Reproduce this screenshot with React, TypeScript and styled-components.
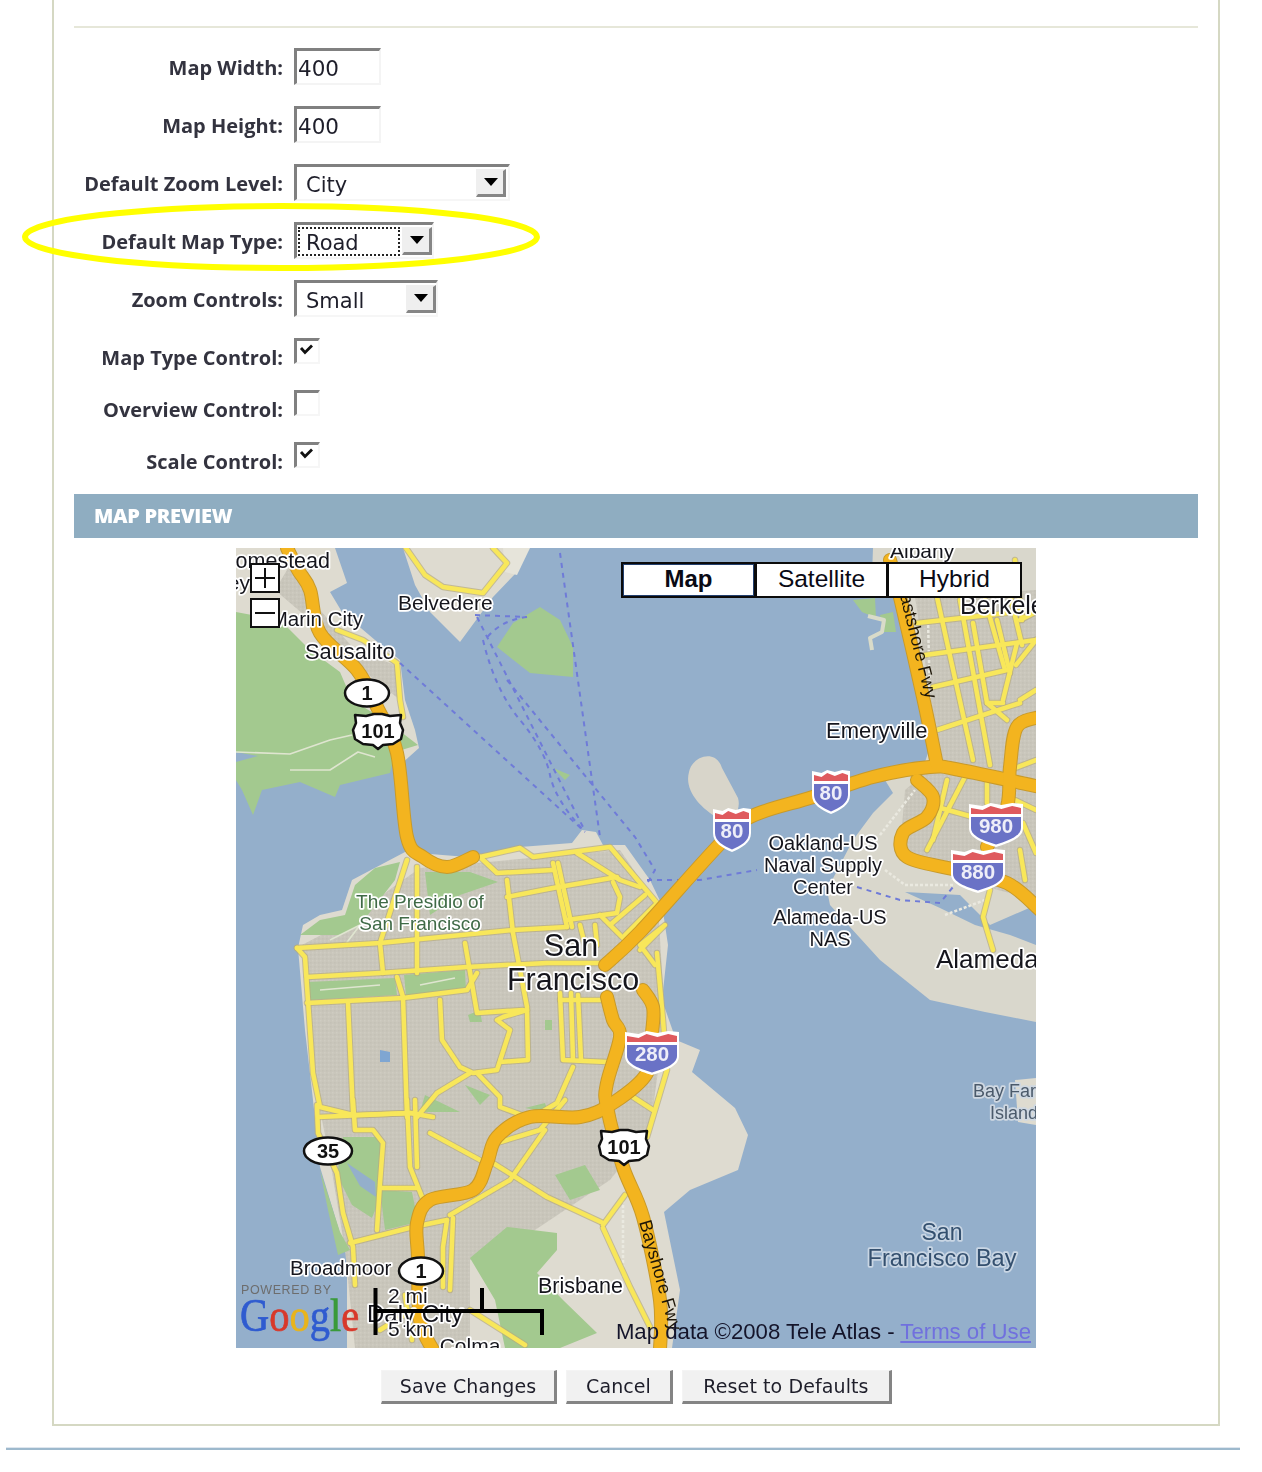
import React from "react";
import styled, { createGlobalStyle } from "styled-components";

const Global = createGlobalStyle`
  html, body { margin: 0; padding: 0; background: #fff; }
`;

const Page = styled.div`
  position: relative;
  width: 1262px;
  height: 1472px;
  overflow: hidden;
  filter: blur(0.5px);
  font-family: "DejaVu Sans", sans-serif;
  color: #2c2c38;
`;

const Panel = styled.div`
  box-sizing: border-box;
  width: 1168px;
  height: 1426px;
  margin-left: 52px;
  padding: 26px 20px 0;
  border: 2px solid #d5d8c3;
  border-top: none;
`;

const Rule = styled.div`
  height: 2px;
  background: #e6e7d9;
  margin-bottom: 20px;
`;

const Row = styled.div<{ $height: number; $gap: number }>`
  display: flex;
  align-items: flex-start;
  height: ${(p) => p.$height}px;
  margin-bottom: ${(p) => p.$gap}px;
`;

const Label = styled.label`
  flex: 0 0 209px;
  margin-right: 11px;
  margin-top: 7px;
  text-align: right;
  font-family: "Open Sans", sans-serif;
  font-weight: 700;
  font-size: 20px;
  line-height: 25px;
  color: #33333f;
  white-space: nowrap;
`;

const TextField = styled.input`
  box-sizing: border-box;
  width: 87px;
  height: 37px;
  padding: 2px 0 0 1px;
  border-style: solid;
  border-width: 3px 2px 2px 3px;
  border-color: #808080 #f4f4f4 #f4f4f4 #808080;
  outline: none;
  font-family: "DejaVu Sans", sans-serif;
  font-size: 21.5px;
  color: #1e1e2a;
  background: #fff;
`;

const SelectBox = styled.div<{ $width: number; $inset: number }>`
  box-sizing: border-box;
  display: flex;
  align-items: stretch;
  justify-content: space-between;
  width: ${(p) => p.$width}px;
  height: 37px;
  padding: 2px ${(p) => p.$inset}px 0 1px;
  border-style: solid;
  border-width: 3px 2px 2px 3px;
  border-color: #808080 #f6f6f6 #f6f6f6 #808080;
  background: #fff;
`;

const SelectValue = styled.div<{ $focused?: boolean }>`
  flex: 1;
  box-sizing: border-box;
  height: 29px;
  padding-left: 6px;
  margin-right: ${(p) => (p.$focused ? "2px" : "4px")};
  border: 2px dotted ${(p) => (p.$focused ? "#222" : "transparent")};
  font-size: 21px;
  line-height: 28px;
  color: #1e1e2a;
`;

const ArrowButton = styled.div`
  box-sizing: border-box;
  flex: 0 0 30px;
  height: 28px;
  display: flex;
  justify-content: center;
  padding-top: 7px;
  background: #efefef;
  border-style: solid;
  border-width: 2px 3px 3px 2px;
  border-color: #efefef #868686 #868686 #efefef;
`;

const ArrowGlyph = styled.div`
  width: 0;
  height: 0;
  border-left: 7px solid transparent;
  border-right: 7px solid transparent;
  border-top: 8px solid #000;
`;

const CheckBox = styled.div`
  box-sizing: border-box;
  width: 26px;
  height: 26px;
  padding: 1px 0 0 1px;
  border-style: solid;
  border-width: 3px 2px 2px 3px;
  border-color: #808080 #f6f6f6 #f6f6f6 #808080;
  background: #fff;
`;

const SectionBar = styled.div`
  box-sizing: border-box;
  height: 44px;
  padding-left: 20px;
  background: #8fadc1;
  color: #fff;
  font-family: "Open Sans", sans-serif;
  font-weight: 800;
  font-size: 20px;
  line-height: 44px;
  letter-spacing: -0.3px;
`;

const MapFrame = styled.div`
  position: relative;
  width: 800px;
  height: 800px;
  margin: 10px 0 22px 162px;
  overflow: hidden;
  background: #94afcb;
`;

const MapCanvas = styled.svg`
  display: block;
`;

const ZoomButton = styled.div<{ $top: number }>`
  position: absolute;
  left: 14px;
  top: ${(p) => p.$top}px;
  box-sizing: border-box;
  width: 30px;
  height: 30px;
  background: #fff;
  border: 2px solid #111;
  display: flex;
  align-items: center;
  justify-content: center;
`;

const TypeBar = styled.div`
  position: absolute;
  left: 386px;
  top: 14px;
  display: flex;
`;

const TypeButton = styled.div<{ $active?: boolean; $width: number }>`
  box-sizing: border-box;
  width: ${(p) => p.$width}px;
  height: 36px;
  background: #fff;
  border: 2px solid #0b0b0b;
  margin-left: -1px;
  box-shadow: ${(p) => (p.$active ? "inset 0 0 0 1px #23406f" : "none")};
  font-family: "Liberation Sans", sans-serif;
  font-size: ${(p) => (p.$active ? 24 : 24.5)}px;
  font-weight: ${(p) => (p.$active ? 700 : 400)};
  line-height: 30px;
  text-align: center;
  color: #0a0a14;
`;

const Attribution = styled.div`
  position: absolute;
  right: 5px;
  bottom: 2px;
  font-family: "Liberation Sans", sans-serif;
  font-size: 22.2px;
  line-height: 28px;
  white-space: nowrap;
  color: #14142a;
`;

const TermsLink = styled.span`
  color: #7070de;
  text-decoration: underline;
`;

const ButtonRow = styled.div`
  display: flex;
  gap: 9px;
  margin-left: 307px;
`;

const ActionButton = styled.button<{ $width: number }>`
  box-sizing: border-box;
  width: ${(p) => p.$width}px;
  height: 34px;
  padding: 0;
  background: #f1f1f1;
  border-style: solid;
  border-width: 1px 3px 3px 1px;
  border-color: #f4f4f4 #848484 #848484 #f4f4f4;
  font-family: "DejaVu Sans", sans-serif;
  font-size: 19px;
  color: #1e1e2a;
  letter-spacing: 0.1px;
`;

const BottomRule = styled.div`
  height: 2px;
  width: 1234px;
  margin: 22px 0 0 6px;
  background: #9db9cd;
  box-shadow: 0 -1px 0 #dfe6ee;
`;

const Highlight = styled.svg`
  position: absolute;
  left: 0;
  top: 190px;
  pointer-events: none;
`;

/* ---------- map drawing parts ---------- */

const Land = styled.path<{ $fill: string }>`
  fill: ${(p) => p.$fill};
  stroke: none;
`;

const Trail = styled.path`
  fill: none;
  stroke: #dfe5d0;
  stroke-width: 1.6;
  stroke-linejoin: round;
`;

const RailLine = styled.path`
  fill: none;
  stroke: #eae9e0;
  stroke-width: 2.5;
  stroke-dasharray: 3 2;
`;

const Pier = styled.path`
  fill: none;
  stroke: #d9dbc9;
  stroke-width: 4;
  stroke-linejoin: round;
`;

const RoadCase = styled.path`
  fill: none;
  stroke: #b7ab7c;
  stroke-width: 6.5;
  stroke-linejoin: round;
  stroke-linecap: round;
  opacity: 0.7;
`;

const RoadFill = styled.path`
  fill: none;
  stroke: #f8e75a;
  stroke-width: 4.5;
  stroke-linejoin: round;
  stroke-linecap: round;
`;

const HighwayCase = styled.path`
  fill: none;
  stroke: #c89a2a;
  stroke-width: 14;
  stroke-linejoin: round;
  stroke-linecap: round;
`;

const HighwayFill = styled.path`
  fill: none;
  stroke: #f3b41f;
  stroke-width: 12;
  stroke-linejoin: round;
  stroke-linecap: round;
`;

const FerryLine = styled.path`
  fill: none;
  stroke: #6f7bd8;
  stroke-width: 2;
  stroke-dasharray: 5 5;
`;

const MapLabel = styled.text<{ $size: number; $color?: string; $halo?: string }>`
  font-family: "Liberation Sans", sans-serif;
  font-size: ${(p) => p.$size}px;
  fill: ${(p) => p.$color ?? "#15151c"};
  stroke: ${(p) => p.$halo ?? "#fff"};
  stroke-width: 3.5px;
  stroke-linejoin: round;
  paint-order: stroke;
`;

const RoadName = styled.text`
  font-family: "Liberation Sans", sans-serif;
  font-size: 18px;
  fill: #1d1608;
`;

const ShieldNumber = styled.text<{ $color: string; $size: number }>`
  font-family: "Liberation Sans", sans-serif;
  font-weight: 700;
  font-size: ${(p) => p.$size}px;
  fill: ${(p) => p.$color};
  text-anchor: middle;
`;

const LogoText = styled.text`
  font-family: "Liberation Serif", serif;
  font-size: 46px;
`;

const LogoLetter = styled.tspan<{ $color: string }>`
  fill: ${(p) => p.$color};
  stroke: ${(p) => p.$color};
  stroke-width: 0.7px;
`;

const PoweredBy = styled.text`
  font-family: "Liberation Sans", sans-serif;
  font-size: 12.5px;
  letter-spacing: 0.6px;
  fill: #6d6d6d;
`;

const ScaleBar = styled.path`
  fill: none;
  stroke: #000;
  stroke-width: 4;
`;

/* ---------- helpers ---------- */

const smooth = (pts: number[][]) => {
  let d = `M${pts[0][0]},${pts[0][1]}`;
  for (let i = 0; i < pts.length - 1; i++) {
    const p0 = pts[Math.max(0, i - 1)];
    const p1 = pts[i];
    const p2 = pts[i + 1];
    const p3 = pts[Math.min(pts.length - 1, i + 2)];
    const c1x = p1[0] + (p2[0] - p0[0]) / 6;
    const c1y = p1[1] + (p2[1] - p0[1]) / 6;
    const c2x = p2[0] - (p3[0] - p1[0]) / 6;
    const c2y = p2[1] - (p3[1] - p1[1]) / 6;
    d += ` C${c1x},${c1y} ${c2x},${c2y} ${p2[0]},${p2[1]}`;
  }
  return d;
};

const roads: string[] = [
  // Marin
  "M406,548 L425,575 L443,587 L483,593 L507,563 L493,548",
  "M337,630 L363,640 L397,663 L400,700 L403,717",
  // San Francisco
  "M297,948 L380,943 L513,930 L567,927",
  "M297,948 L305,957 L313,1073 L320,1107 L353,1115 L413,1113",
  "M307,977 L380,973 L467,967 L547,963 L603,963",
  "M307,1003 L403,998 L467,990 L477,973",
  "M380,943 L383,973",
  "M417,867 L417,973",
  "M407,860 L380,943",
  "M403,997 L407,1117",
  "M348,1003 L353,1113",
  "M397,977 L403,997",
  "M465,943 L477,1013 L523,1010",
  "M513,933 L527,1007 L528,1060 L500,1062",
  "M507,880 L513,933",
  "M480,857 L497,873 L553,870",
  "M480,857 L520,848 L533,857 L610,847 L657,903 L640,935",
  "M553,863 L567,927",
  "M558,863 L572,927",
  "M507,897 L553,888 L617,877",
  "M613,882 L620,897 L617,913 L567,920",
  "M577,853 L620,880 L640,887",
  "M610,925 L645,895 M625,935 L655,905 M600,915 L630,945 M580,925 L585,945 M595,925 L597,945",
  "M440,1000 L442,1040 L460,1067 L473,1073 L497,1070 L510,1030 L497,1020 L503,1017 L527,1010",
  "M477,1073 L500,1097 L500,1107 L527,1117",
  "M470,1073 L437,1093 L417,1117",
  "M560,993 L563,1060 L607,1062",
  "M571,993 L573,1060",
  "M578,995 L581,1060",
  "M560,1000 L607,1000",
  "M573,1067 L557,1103 L540,1113",
  "M657,953 L663,1020 L667,1070 L647,1137",
  "M633,1097 L653,1110",
  "M640,950 L665,925 L640,945 L655,965",
  // South
  "M318,1117 L410,1113 L433,1117",
  "M317,1105 L318,1133 L337,1173 L343,1213 L353,1247 L355,1285",
  "M350,1243 L413,1227 L447,1220",
  "M353,1100 L355,1130 L373,1130 L383,1143 L380,1183 L377,1230",
  "M407,1100 L410,1167 L422,1197",
  "M415,1100 L417,1167",
  "M380,1188 L417,1188",
  "M430,1133 L480,1160",
  "M493,1163 L547,1197 L603,1223",
  "M497,1143 L540,1130 L565,1100",
  "M447,1220 L443,1247 L443,1287",
  "M453,1218 L450,1290",
  "M450,1215 L510,1180 L545,1130",
  "M603,1228 L630,1287 L650,1327",
  "M603,1225 L625,1195",
  "M470,1310 L525,1345",
  "M405,1295 L412,1340 M380,1330 L412,1310",
  // East Bay
  "M937,597 L973,760",
  "M960,600 L990,765",
  "M985,600 L1005,670",
  "M1010,595 L1022,645",
  "M917,623 L1033,610",
  "M925,655 L1036,640",
  "M933,687 L1007,670",
  "M937,730 L1020,703",
  "M973,623 L987,703 L1003,703",
  "M997,620 L1010,673",
  "M1017,643 L1003,700",
  "M987,703 L1007,720",
  "M1015,560 L1022,620",
  "M1020,620 L1036,612 M1016,665 L1036,640",
  "M1020,700 L1036,690",
  "M967,773 L927,850",
  "M947,780 L933,840",
  "M987,780 L987,803",
  "M937,807 L973,817",
  "M990,890 L983,917 L993,950",
  "M1023,823 L1036,853",
  "M1015,800 L1036,810 M1020,850 L1025,880",
  "M1010,770 L1036,760",
];

const highways: number[][][] = [
  [[287,548],[298,570],[310,590],[320,633],[357,670],[377,707],[397,753],[407,837],[423,857],[447,867],[473,857]],
  [[605,965],[640,932],[717,847],[750,817],[813,797],[873,777],[930,767],[960,770],[1040,787]],
  [[890,560],[900,597],[923,697],[937,765]],
  [[917,780],[933,797],[927,817],[903,833],[907,857],[957,870],[1007,883],[1040,910]],
  [[1040,717],[1017,727],[1010,767],[1007,807],[987,847]],
  [[643,990],[653,1007],[652,1033],[647,1073],[613,1103],[580,1117],[530,1117],[497,1137],[487,1163],[473,1190],[430,1200],[417,1223],[418,1257],[420,1320],[433,1350]],
  [[607,997],[613,1020],[620,1037],[607,1083],[607,1107],[623,1167],[643,1217],[660,1300],[660,1350]],
];

const ferries: string[] = [
  "M400,663 L585,832",
  "M477,617 L583,827",
  "M483,640 Q495,690 520,720 T550,775 T585,832",
  "M560,553 L600,837",
  "M475,615 L527,617 M527,617 Q500,620 485,640",
  "M507,680 L635,837 L655,870 L648,882",
  "M647,880 L700,880 L757,870",
  "M857,887 L900,900 L940,903 L953,887",
];

const trails: string[] = [
  "M236,752 L290,754 L330,740 L352,735",
  "M290,770 L330,770 L358,752 L375,757",
  "M330,940 L360,925 L345,945",
  "M320,990 L380,985 M420,985 L455,978",
];

const rails: string[] = [
  "M623,1200 L623,1277",
  "M880,835 L915,790",
  "M885,870 L905,885 L955,885",
  "M945,915 L985,900",
  "M928,620 L930,700",
];

const OvalShield = ({ x, y, n, rx = 22 }: { x: number; y: number; n: string; rx?: number }) => (
  <g transform={`translate(${x} ${y})`}>
    <ellipse rx={rx} ry={13.5} fill="#fff" stroke="#111" strokeWidth={2.5} />
    <ShieldNumber $color="#111" $size={20} y={7}>{n}</ShieldNumber>
  </g>
);

const UsShield = ({ x, y, n }: { x: number; y: number; n: string }) => (
  <g transform={`translate(${x} ${y})`}>
    <path
      d="M-23,-16 L-12,-15 L-4,-17 L4,-17 L12,-15 L23,-16 L22,-8 L25,-1 L23,8 L15,13 L5,14 L0,18 L-5,14 L-15,13 L-23,8 L-25,-1 L-22,-8 Z"
      fill="#fff"
      stroke="#111"
      strokeWidth={2.5}
      strokeLinejoin="round"
    />
    <ShieldNumber $color="#111" $size={20} y={7}>{n}</ShieldNumber>
  </g>
);

const InterstateShield = ({ x, y, n, w }: { x: number; y: number; n: string; w: number }) => {
  const h = w / 2;
  return (
    <g transform={`translate(${x} ${y})`}>
      <path
        d={`M${-h},-21 L${-h * 0.5},-19 L${-h * 0.2},-22 L${h * 0.2},-20 L${h * 0.6},-22 L${h},-21 L${h},3 C${h},13 ${h * 0.5},18 0,22 C${-h * 0.5},18 ${-h},13 ${-h},3 Z`}
        fill="#fff"
      />
      <path
        d={`M${-h + 2},-11 L${-h + 2},-17 L${-h * 0.5},-15 L${-h * 0.2},-19 L${h * 0.2},-16 L${h * 0.6},-19 L${h - 2},-17 L${h - 2},-11 Z`}
        fill="#df5a5e"
      />
      <path
        d={`M${-h + 2},-8 L${h - 2},-8 L${h - 2},3 C${h - 2},11 ${h * 0.45},16 0,19.5 C${-h * 0.45},16 ${-h + 2},11 ${-h + 2},3 Z`}
        fill="#6a72c6"
      />
      <ShieldNumber $color="#eeeef8" $size={20.5} y={8}>{n}</ShieldNumber>
    </g>
  );
};

const CheckMark = () => (
  <svg width="18" height="16" viewBox="0 0 18 16">
    <path d="M3,6 L7,10.5 L14,3.5" fill="none" stroke="#111" strokeWidth="2.8" />
  </svg>
);

const MapArt = () => (
  <MapCanvas width={800} height={800} viewBox="236 548 800 800">
    <defs>
      <pattern id="urban" width="4" height="4" patternUnits="userSpaceOnUse">
        <rect width="4" height="4" fill="#c9c6bb" />
        <rect x="0" y="0" width="1.5" height="1.5" fill="#cfccc2" />
        <rect x="2" y="2" width="1.5" height="1.5" fill="#c4c1b6" />
      </pattern>
    </defs>
    <rect x={236} y={548} width={800} height={800} fill="#94afcb" />

    {/* Marin */}
    <Land $fill="#dedbd0" d="M236,548 L335,548 L347,583 L330,592 L342,612 L375,640 L400,660 L405,700 L415,730 L419,748 L400,765 L236,700 Z" />
    <Land $fill="url(#urban)" d="M290,565 L320,610 L355,650 L395,665 L400,700 L350,660 L310,620 L275,590 Z" />
    <Land $fill="#a3c98f" d="M236,612 L280,620 L310,650 L340,672 L352,700 L388,722 L418,745 L395,752 L390,773 L340,785 L335,797 L300,782 L262,790 L253,815 L242,790 L236,780 Z" />
    <Land $fill="#94afcb" d="M236,752 L258,756 L236,762 Z" />
    <Land $fill="#dedbd0" d="M403,548 L517,548 L516,573 L493,597 L460,642 L430,612 L415,585 Z" />
    <Land $fill="#e6e4da" d="M503,548 L530,548 L517,575 L505,572 Z" />
    <Land $fill="#a3c98f" d="M540,607 L560,620 L573,647 L573,677 L530,673 L497,647 L513,623 Z" />
    <Land $fill="#a3c98f" d="M553,768 L570,775 L565,780 Z" />

    {/* Treasure Island */}
    <Land $fill="#d8d5ca" d="M689,772 C692,756 716,748 722,768 L738,798 C742,812 730,826 718,818 C700,808 684,790 689,772 Z" />

    {/* Albany shoals and piers */}
    <Land $fill="#a3c98f" d="M853,600 L875,598 L876,618 L862,612 Z" />
    <Land $fill="#a3c98f" d="M880,615 L893,612 L896,632 L884,632 Z" />
    <Pier d="M868,616 L884,620 L882,632 L870,638 L872,650" />

    {/* East Bay */}
    <Land $fill="#d9d7cc" d="M873,548 L1036,548 L1036,1022 L985,1012 L930,1000 L880,960 L830,905 L827,890 L853,840 L873,813 L893,793 L880,772 L925,762 L930,747 L917,657 L895,597 L872,575 Z" />
    <Land $fill="url(#urban)" d="M915,597 L1036,590 L1036,900 L960,880 L900,850 L905,790 L940,760 Z" />
    <Land $fill="#94afcb" d="M905,892 L960,895 L990,925 L1036,905 L1036,945 L1010,935 L975,925 L940,908 Z" />
    <Land $fill="#dedbd0" d="M1015,1080 L1036,1078 L1036,1125 L1018,1122 Z" />

    {/* San Francisco and peninsula */}
    <Land $fill="#dedbd0" d="M298,948 L303,925 L320,915 L342,910 L352,880 L405,852 L480,858 L520,847 L572,843 L582,830 L596,832 L603,845 L625,845 L650,880 L662,905 L668,945 L662,1000 L676,1040 L700,1050 L692,1072 L735,1108 L748,1135 L738,1170 L690,1190 L664,1212 L680,1290 L672,1348 L347,1348 L347,1257 L333,1210 L320,1167 L313,1100 L305,1030 Z" />
    <Land $fill="url(#urban)" d="M302,945 L340,925 L420,868 L620,850 L658,905 L665,1020 L650,1130 L610,1180 L520,1240 L470,1260 L470,1348 L355,1348 L345,1250 L330,1160 L310,1060 Z" />
    <Land $fill="#a3c98f" d="M300,935 L320,920 L345,915 L355,885 L375,868 L400,862 L395,880 L360,925 L340,935 Z" />
    <Land $fill="#a3c98f" d="M425,872 L470,872 L498,882 L460,895 L430,915 Z" />
    <Land $fill="#a3c98f" d="M308,982 L395,978 L397,995 L310,1000 Z" />
    <Land $fill="#a3c98f" d="M404,975 L465,970 L466,990 L406,996 Z" />
    <Land $fill="#a3c98f" d="M343,1137 L380,1137 L383,1190 L372,1218 L352,1205 L337,1175 Z" />
    <Land $fill="#94afcb" d="M347,1163 L375,1182 L376,1197 L360,1186 Z" />
    <Land $fill="#a3c98f" d="M320,1170 L340,1232 L350,1250 L338,1255 L328,1210 Z" />
    <Land $fill="#a3c98f" d="M470,1258 L507,1227 L557,1233 L557,1250 L537,1273 L563,1300 L597,1333 L560,1348 L505,1348 L495,1300 Z" />
    <Land $fill="#a3c98f" d="M380,1190 L412,1192 L418,1222 L385,1230 Z" />
    <Land $fill="#a3c98f" d="M555,1175 L585,1165 L600,1190 L570,1200 Z" />
    <Land $fill="#a3c98f" d="M525,1108 L545,1103 L548,1112 Z" />
    <Land $fill="#a3c98f" d="M425,1095 L460,1112 L420,1112 Z" />
    <Land $fill="#a3c98f" d="M465,1085 L490,1095 L480,1105 Z" />
    <Land $fill="#a3c98f" d="M468,1015 L480,1010 L482,1022 L470,1022 Z" />
    <Land $fill="#a3c98f" d="M545,1020 L552,1020 L552,1030 L545,1030 Z" />
    <Land $fill="#7fa6d2" d="M380,1050 L390,1052 L390,1062 L380,1062 Z" />

    {trails.map((d, i) => (
      <Trail key={i} d={d} />
    ))}
    {rails.map((d, i) => (
      <RailLine key={i} d={d} />
    ))}
    {roads.map((d, i) => (
      <RoadCase key={`c${i}`} d={d} />
    ))}
    {roads.map((d, i) => (
      <RoadFill key={`f${i}`} d={d} />
    ))}
    {ferries.map((d, i) => (
      <FerryLine key={i} d={d} />
    ))}
    {highways.map((p, i) => (
      <HighwayCase key={`hc${i}`} d={smooth(p)} />
    ))}
    {highways.map((p, i) => (
      <HighwayFill key={`hf${i}`} d={smooth(p)} />
    ))}

    <RoadName transform="translate(897 584) rotate(76)">Eastshore Fwy</RoadName>
    <RoadName transform="translate(639 1222) rotate(74)">Bayshore Fwy</RoadName>

    <MapLabel $size={21.5} x={330} y={568} textAnchor="end">Homestead</MapLabel>
    <MapLabel $size={21} x={250} y={590} textAnchor="end">ey</MapLabel>
    <MapLabel $size={20.5} x={363} y={626} textAnchor="end">Marin City</MapLabel>
    <MapLabel $size={21.8} x={305} y={659}>Sausalito</MapLabel>
    <MapLabel $size={21} x={398} y={610}>Belvedere</MapLabel>
    <MapLabel $size={21} x={890} y={558}>Albany</MapLabel>
    <MapLabel $size={25} x={960} y={614}>Berkeley</MapLabel>
    <MapLabel $size={22} x={826} y={738}>Emeryville</MapLabel>
    <MapLabel $size={20} x={823} y={850} textAnchor="middle">Oakland-US</MapLabel>
    <MapLabel $size={20} x={823} y={872} textAnchor="middle">Naval Supply</MapLabel>
    <MapLabel $size={20} x={823} y={894} textAnchor="middle">Center</MapLabel>
    <MapLabel $size={20} x={830} y={924} textAnchor="middle">Alameda-US</MapLabel>
    <MapLabel $size={20} x={830} y={946} textAnchor="middle">NAS</MapLabel>
    <MapLabel $size={26} x={936} y={968}>Alameda</MapLabel>
    <MapLabel $size={19} $color="#3f6a46" x={420} y={908} textAnchor="middle">The Presidio of</MapLabel>
    <MapLabel $size={19} $color="#3f6a46" x={420} y={930} textAnchor="middle">San Francisco</MapLabel>
    <MapLabel $size={30.5} x={571} y={956} textAnchor="middle">San</MapLabel>
    <MapLabel $size={30.5} x={573} y={990} textAnchor="middle">Francisco</MapLabel>
    <MapLabel $size={18} $color="#4b5a6b" $halo="#cfd8e2" x={973} y={1097}>Bay Farm</MapLabel>
    <MapLabel $size={18} $color="#4b5a6b" $halo="#cfd8e2" x={990} y={1119}>Island</MapLabel>
    <MapLabel $size={23} $color="#34506f" $halo="#c9d6e4" x={942} y={1240} textAnchor="middle">San</MapLabel>
    <MapLabel $size={23.5} $color="#34506f" $halo="#c9d6e4" x={942} y={1266} textAnchor="middle">Francisco Bay</MapLabel>
    <MapLabel $size={20.5} x={290} y={1275}>Broadmoor</MapLabel>
    <MapLabel $size={21.5} x={538} y={1293}>Brisbane</MapLabel>
    <MapLabel $size={21} x={470} y={1353} textAnchor="middle">Colma</MapLabel>
    <MapLabel $size={24} x={367} y={1322}>Daly City</MapLabel>

    <OvalShield x={367} y={693} n="1" />
    <UsShield x={378} y={731} n="101" />
    <OvalShield x={328} y={1151} n="35" rx={24} />
    <OvalShield x={421} y={1271} n="1" />
    <UsShield x={624} y={1147} n="101" />
    <InterstateShield x={831} y={792} n="80" w={38} />
    <InterstateShield x={732} y={830} n="80" w={38} />
    <InterstateShield x={996} y={825} n="980" w={54} />
    <InterstateShield x={978} y={871} n="880" w={54} />
    <InterstateShield x={652} y={1053} n="280" w={54} />

    <ScaleBar d="M375.5,1288 L375.5,1335 M375,1311 L544,1311 M482,1288 L482,1311 M542,1311 L542,1335" />
    <MapLabel $size={21} x={388} y={1303}>2 mi</MapLabel>
    <MapLabel $size={21} x={388} y={1336}>5 km</MapLabel>

    <PoweredBy x={241} y={1294}>POWERED BY</PoweredBy>
    <LogoText transform="translate(240 1331) scale(0.88 1)">
      <LogoLetter $color="#2f5bd0">G</LogoLetter>
      <LogoLetter $color="#d8382a">o</LogoLetter>
      <LogoLetter $color="#e9b41a">o</LogoLetter>
      <LogoLetter $color="#2f5bd0">g</LogoLetter>
      <LogoLetter $color="#3a9a3a">l</LogoLetter>
      <LogoLetter $color="#d8382a">e</LogoLetter>
    </LogoText>
  </MapCanvas>
);

const Plus = () => (
  <svg width="22" height="22" viewBox="0 0 22 22">
    <path d="M11,1 V21 M1,11 H21" stroke="#111" strokeWidth="2" fill="none" />
  </svg>
);

const Minus = () => (
  <svg width="22" height="22" viewBox="0 0 22 22">
    <path d="M1,11 H21" stroke="#111" strokeWidth="2" fill="none" />
  </svg>
);

const fields = [
  { label: "Map Width:", kind: "text", value: "400" },
  { label: "Map Height:", kind: "text", value: "400" },
  { label: "Default Zoom Level:", kind: "select", value: "City", width: 216, inset: 2 },
  { label: "Default Map Type:", kind: "select", value: "Road", width: 140, inset: 0, focused: true },
  { label: "Zoom Controls:", kind: "select", value: "Small", width: 144, inset: 0 },
];

const checks = [
  { label: "Map Type Control:", on: true },
  { label: "Overview Control:", on: false },
  { label: "Scale Control:", on: true },
];

export default function App() {
  return (
    <Page>
      <Global />
      <Panel>
        <Rule />
        {fields.map((f) => (
          <Row key={f.label} $height={37} $gap={21}>
            <Label>{f.label}</Label>
            {f.kind === "text" ? (
              <TextField readOnly defaultValue={f.value} />
            ) : (
              <SelectBox $width={f.width as number} $inset={f.inset as number}>
                <SelectValue $focused={f.focused}>{f.value}</SelectValue>
                <ArrowButton>
                  <ArrowGlyph />
                </ArrowButton>
              </SelectBox>
            )}
          </Row>
        ))}
        {checks.map((c) => (
          <Row key={c.label} $height={26} $gap={26}>
            <Label>{c.label}</Label>
            <CheckBox>{c.on && <CheckMark />}</CheckBox>
          </Row>
        ))}
        <SectionBar>MAP PREVIEW</SectionBar>
        <MapFrame>
          <MapArt />
          <ZoomButton $top={15}>
            <Plus />
          </ZoomButton>
          <ZoomButton $top={50}>
            <Minus />
          </ZoomButton>
          <TypeBar>
            <TypeButton $active $width={135}>Map</TypeButton>
            <TypeButton $width={133}>Satellite</TypeButton>
            <TypeButton $width={135}>Hybrid</TypeButton>
          </TypeBar>
          <Attribution>
            Map data ©2008 Tele Atlas - <TermsLink>Terms of Use</TermsLink>
          </Attribution>
        </MapFrame>
        <ButtonRow>
          <ActionButton $width={176}>Save Changes</ActionButton>
          <ActionButton $width={107}>Cancel</ActionButton>
          <ActionButton $width={210}>Reset to Defaults</ActionButton>
        </ButtonRow>
      </Panel>
      <BottomRule />
      <Highlight width={560} height={100} viewBox="0 190 560 100">
        <ellipse cx={281} cy={237} rx={256} ry={31} fill="none" stroke="#ffff00" strokeWidth={6} />
      </Highlight>
    </Page>
  );
}
